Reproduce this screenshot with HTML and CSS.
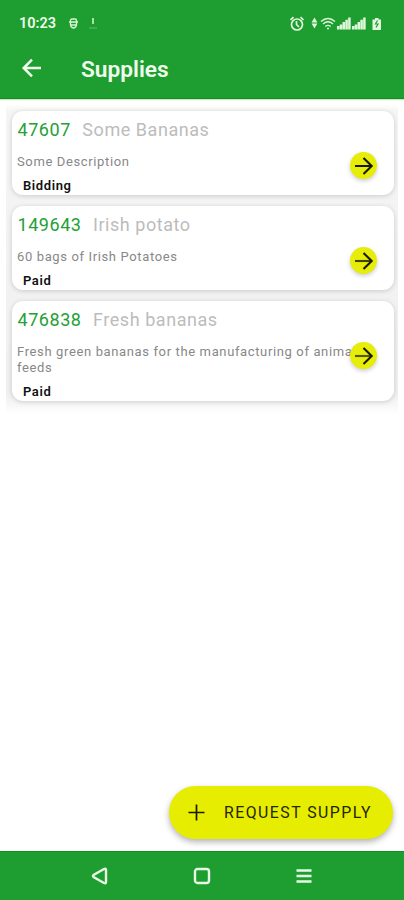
FILE: index.html
```html
<!DOCTYPE html>
<html lang="en">
<head>
<meta charset="utf-8">
<title>Supplies</title>
<link rel="stylesheet" href="styles.css">
</head>
<body>
<div class="screen">
  <header class="top">
    <div class="status">
      <span class="time">10:23</span>
      <svg class="notif" width="30" height="14" viewBox="0 0 30 14" fill="none" stroke="#d9f5d2" stroke-width="1.3">
        <path d="M1.5 3.5Q1.5 2 3 2H6Q7.500 2 7.500 3.500V7.500Q7.500 10.500 4.500 11Q1.500 10.500 1.500 7.500ZM0 5H9M1 8H8"/>
        <path d="M24 1V7" stroke-width="1.5"/><path d="M20 11H28" stroke-width=".6" opacity=".6"/>
      </svg>
      <svg class="system" width="94" height="16" viewBox="0 0 94 16" fill="none" stroke="#e2f8dc" stroke-width="1.7">
        <circle cx="7" cy="8.500" r="5.500"/>
        <path d="M6.500 5V8.500L9 11M.5 4L3.500 1.200M13.500 4L10.500 1.200"/>
        <path d="M24.500 1.500L27.400 6.500H21.600ZM24.500 12.500L27.400 7.500H21.600Z" fill="#e2f8dc" stroke="none"/>
        <path d="M31 5.500Q38 -.5 45 5.500M33 8Q38 3.500 43 8M35.300 10.500Q38 8.300 40.700 10.500" stroke-width="1.3"/>
        <circle cx="38" cy="12.500" r="1" fill="#e2f8dc" stroke="none"/>
        <path d="M48.200 13.500V10M51.000 13.500V8.500M53.800 13.500V6M56.600 13.500V3.800M59.400 13.500V1.500M63.200 13.500V10M66 13.500V8.500M68.800 13.500V6M71.600 13.500V3.800M74.400 13.500V1.500" stroke-width="2.500"/>
        <path d="M82.500 3.500H85V2H88.500V3.500H91V14H82.500Z" fill="#e2f8dc" stroke="none"/>
        <path d="M87.500 4.500L85.500 8H88L86 11.500" stroke="#1e9e31" stroke-width="1.2"/>
      </svg>
    </div>
    <div class="appbar">
      <svg class="back" width="22" height="20" viewBox="0 0 22 20" fill="none" stroke="#f0fbed" stroke-width="2.500"><path d="M20 10H3M11 1.700L2.700 10L11 18.300"/></svg>
      <h1>Supplies</h1>
    </div>
  </header>
  <main>
    <div class="list">
      <article class="card">
        <div class="title"><span class="id">47607</span><span class="name">Some Bananas</span></div>
        <p class="desc">Some Description</p>
        <div class="state">Bidding</div>
        <button class="go" aria-label="Open"><svg width="20" height="18" viewBox="0 0 20 18"><path d="M1 9H17.500M9.500 1L17.700 9L9.500 17"/></svg></button>
      </article>
      <article class="card">
        <div class="title"><span class="id">149643</span><span class="name">Irish potato</span></div>
        <p class="desc">60 bags of Irish Potatoes</p>
        <div class="state">Paid</div>
        <button class="go" aria-label="Open"><svg width="20" height="18" viewBox="0 0 20 18"><path d="M1 9H17.500" opacity=".8"/><path d="M9.500 1L17.700 9L9.500 17"/></svg></button>
      </article>
      <article class="card">
        <div class="title"><span class="id">476838</span><span class="name">Fresh bananas</span></div>
        <p class="desc">Fresh green bananas for the manufacturing of animal feeds</p>
        <div class="state">Paid</div>
        <button class="go" aria-label="Open"><svg width="20" height="18" viewBox="0 0 20 18"><path d="M1 9H17.500" opacity=".7"/><path d="M9.500 1L17.700 9L9.500 17"/></svg></button>
      </article>
    </div>
  </main>
  <div class="actions">
    <button class="request"><svg width="17" height="17" viewBox="0 0 17 17"><path d="M.5 8.500H16.500M8.500 .5V16.500"/></svg><span>REQUEST SUPPLY</span></button>
  </div>
  <nav class="nav">
    <svg width="18" height="18" viewBox="0 0 18 18"><path d="M2.500 8Q1.500 9 2.500 10L13 16Q15 17 15 15V3Q15 1 13 2Z"/></svg>
    <svg width="18" height="18" viewBox="0 0 18 18"><rect x="2" y="2" width="14" height="14" rx="2.500"/></svg>
    <svg width="18" height="18" viewBox="0 0 18 18"><path d="M1.500 3.500H16.500M1.500 9H16.500M1.500 14.500H16.500"/></svg>
  </nav>
</div>
</body>
</html>
```
FILE: styles.css
```css
* { box-sizing: border-box; }
body { margin: 0; background: #fff; font-family: Roboto, "Liberation Sans", sans-serif; }
h1, p { margin: 0; }
button { border: 0; padding: 0; font-family: inherit; }
svg { display: block; flex: none; }
.screen { width: 404px; height: 900px; display: flex; flex-direction: column; overflow: hidden; }
.top { height: 99px; flex: none; background: #1e9e31; border-bottom: 1px solid #128f1c; box-shadow: 0 1px 1px #c9e8c6; }
.status { height: 47px; display: flex; align-items: center; padding: 0 20px 0 19px; }
.time { width: 50px; font-size: 14.5px; font-weight: 600; color: #eefbea; }
.system { margin-left: auto; }
.appbar { height: 44px; display: flex; align-items: center; padding-left: 21px; }
.appbar h1 { margin: 2px 0 0 38px; font-size: 22.700px; line-height: 28px; font-weight: 600; color: #effbec; }
.back { margin-top: -3px; }
main { flex: 1; padding: 5px 6px 0; }
.list {
  display: flex; flex-direction: column; gap: 11.500px; padding: 7px 4px 14px 6px;
  background: linear-gradient(#fff 0, #f5f5f5 7px, #f0f0f0 290px, #fff 100%);
}
.card {
  position: relative; padding: 6px 5px 0; height: 83.500px; border-radius: 11px; background: #fff;
  box-shadow: 0 1px 5px rgba(0, 0, 0, .17);
}
.card:last-child { height: 100px; }
.title { display: flex; gap: 11.500px; height: 24px; padding-left: .5px; line-height: 25px; font-size: 18px; letter-spacing: .55px; }
.id { color: #24a035; }
.name { color: #bcbcbc; }
.desc { padding-top: 13px; font-size: 13px; line-height: 16px; letter-spacing: .63px; color: #888; }
.state { margin: 0 0 0 6px; padding-top: 8px; font-size: 13px; line-height: 16px; font-weight: 600; letter-spacing: .6px; color: #111; }
.go {
  position: absolute; right: 17px; top: 41px; width: 27px; height: 27px; border-radius: 50%;
  display: grid; place-items: center; background: #e5ed08; box-shadow: 0 2px 4px rgba(0, 0, 0, .2);
}
.go path, .request path { fill: none; stroke: #1a1a00; stroke-width: 2.1; }
.actions { display: flex; justify-content: flex-end; padding: 0 11px 12px 0; }
.request {
  width: 224px; height: 53px; border-radius: 27px; display: flex; align-items: center; gap: 19px; padding: 0 0 0 19px;
  background: #e6ed00; color: #242600; font-size: 15.8px; font-weight: 450; letter-spacing: 1.5px; white-space: nowrap;
  box-shadow: 0 3px 6px rgba(0, 0, 0, .3);
}
.request path { stroke-width: 1.7; }
.nav {
  height: 49px; flex: none; display: flex; align-items: center; justify-content: center; gap: 84px;
  background: #1e9e31; border-top: 1px solid #128f1c;
}
.nav svg { fill: none; stroke: #e9f9e4; stroke-width: 2.4; }
```
